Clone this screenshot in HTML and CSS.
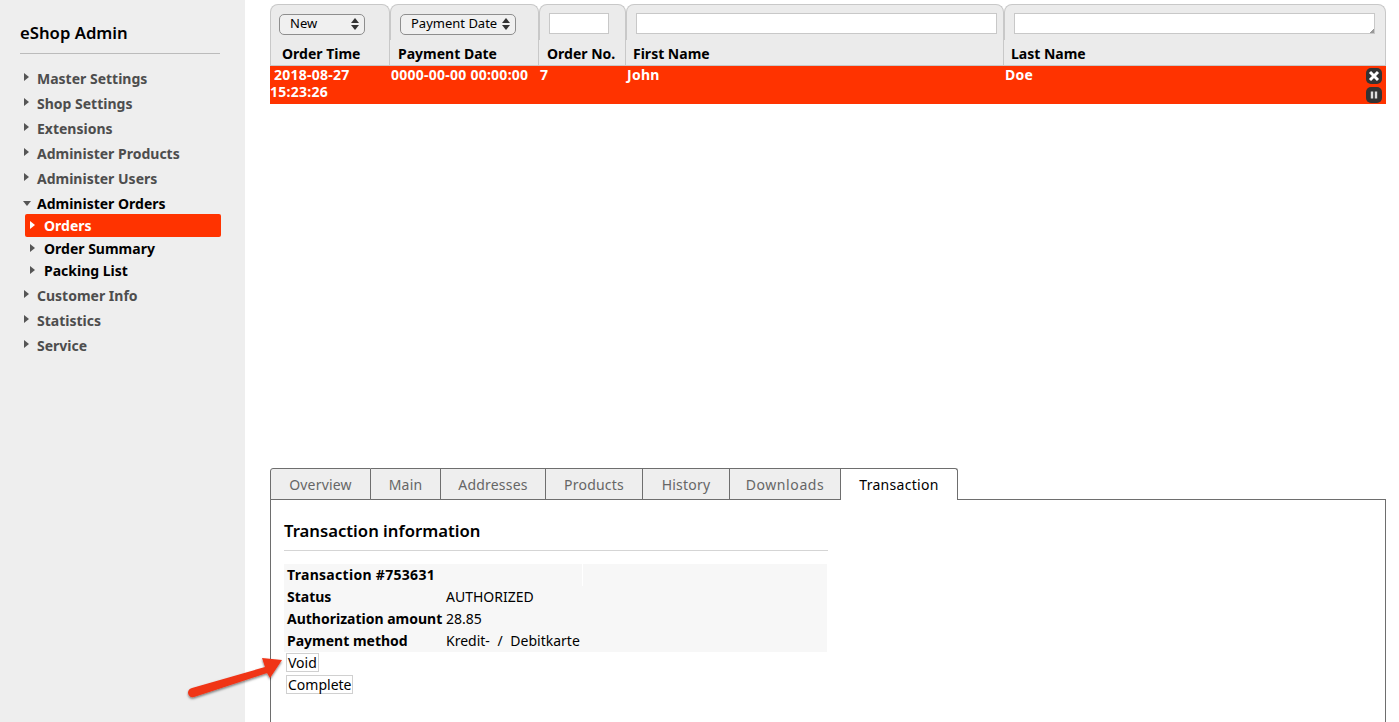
FILE: index.html

```html
<!DOCTYPE html>
<html lang="en">
<head>
    <meta charset="UTF-8">
    <title>eShop Admin</title>
    <link rel="stylesheet" href="styles.css">
</head>
<body>

<aside class="sidebar">
  <h1 class="brand">eShop Admin</h1>
  <ul class="nav">
    <li class="nav-item">Master Settings</li>
    <li class="nav-item">Shop Settings</li>
    <li class="nav-item">Extensions</li>
    <li class="nav-item">Administer Products</li>
    <li class="nav-item">Administer Users</li>
    <li class="nav-item open">Administer Orders</li>
    <li>
      <ul class="subnav">
        <li class="sub-item active">Orders</li>
        <li class="sub-item">Order Summary</li>
        <li class="sub-item">Packing List</li>
      </ul>
    </li>
    <li class="nav-item">Customer Info</li>
    <li class="nav-item">Statistics</li>
    <li class="nav-item">Service</li>
  </ul>
</aside>

<main class="content">
  <table class="orders">
    <colgroup>
      <col class="c1"><col class="c2"><col class="c3"><col class="c4"><col class="c5">
    </colgroup>
    <thead>
      <tr class="filters">
        <th><span class="select sel-new">New<i class="updown"></i></span></th>
        <th><span class="select sel-date">Payment Date<i class="updown"></i></span></th>
        <th><input class="box box-no" type="text"></th>
        <th><input class="box box-wide" type="text"></th>
        <th><textarea class="box box-last" rows="1"></textarea></th>
      </tr>
      <tr class="titles">
        <th class="t1">Order Time</th>
        <th class="t2">Payment Date</th>
        <th class="t2">Order No.</th>
        <th>First Name</th>
        <th>Last Name</th>
      </tr>
    </thead>
    <tbody>
      <tr class="row-new">
        <td><span class="indent"></span>2018-08-27 15:23:26</td>
        <td>0000-00-00 00:00:00</td>
        <td>7</td>
        <td>John</td>
        <td class="last-cell">Doe
          <span class="row-actions">
            <span class="act">
              <svg width="12" height="12" viewBox="0 0 12 12"><path d="M2 2l8 8M10 2l-8 8" stroke="#fff" stroke-width="3"/></svg>
            </span>
            <span class="act">
              <svg width="12" height="12" viewBox="0 0 12 12"><path d="M4 2.5v7M8 2.5v7" stroke="#ddd" stroke-width="2.4"/></svg>
            </span>
          </span>
        </td>
      </tr>
    </tbody>
  </table>

  <div class="tabs">
    <a class="tab first">Overview</a>
    <a class="tab">Main</a>
    <a class="tab">Addresses</a>
    <a class="tab">Products</a>
    <a class="tab">History</a>
    <a class="tab">Downloads</a>
    <a class="tab current">Transaction</a>
  </div>
  <section class="panel">
    <h2 class="panel-title">Transaction information</h2>
    <table class="info">
      <tr><th class="txn-no">Transaction #753631</th><td class="split"></td><td></td></tr>
      <tr><th>Status</th><td>AUTHORIZED</td><td></td></tr>
      <tr><th>Authorization amount</th><td>28.85</td><td></td></tr>
      <tr><th>Payment method</th><td>Kredit- / Debitkarte</td><td></td></tr>
    </table>
    <div class="btn-line"><span class="txn-btn">Void</span></div>
    <div class="btn-line"><span class="txn-btn">Complete</span></div>
  </section>
</main>

<svg class="arrow" width="110" height="56" viewBox="0 0 110 56">
  <defs>
    <filter id="shadow" x="-10%" y="-20%" width="120%" height="150%">
      <feDropShadow dx="0" dy="1.5" stdDeviation="1.2" flood-color="#000" flood-opacity="0.5"/>
    </filter>
  </defs>
  <path filter="url(#shadow)" fill="#f03418" d="M76 3 L96 5 L84 23 L81 18 L8 42 Q3 43 2 38 Q2 34 6 33 L79 12 Z"/>
</svg>

</body>
</html>
```

FILE: styles.css

```css
html, body {
    margin: 0;
    padding: 0;
    height: 100%;
    overflow: hidden;
}

body {
    display: flex;
    background: #fff;
    color: #000;
    font-family: "Noto Sans", "DejaVu Sans", sans-serif;
    font-size: 14px;
}

/* sidebar */
.sidebar {
    width: 245px;
    flex: none;
    background: #eee;
    padding: 21px 25px 0 20px;
    box-sizing: border-box;
}

.brand {
    margin: 0 0 12px;
    padding-bottom: 9px;
    border-bottom: 1px solid #bbb;
    font-size: 16.7px;
    font-weight: 600;
    line-height: 23px;
}

.nav, .subnav {
    list-style: none;
    margin: 0;
    padding: 0;
}

.nav-item {
    position: relative;
    height: 25px;
    line-height: 25px;
    padding-left: 17px;
    font-weight: 700;
    color: #4d4d4d;
}

.nav-item::before, .sub-item::before {
    content: "";
    position: absolute;
    left: 4px;
    top: 7px;
    border-left: 5px solid #555;
    border-top: 4px solid transparent;
    border-bottom: 4px solid transparent;
}

.sub-item::before {
    left: 5px;
}

.nav-item.open {
    color: #000;
}

.nav-item.open::before {
    left: 3px;
    top: 10px;
    border-top: 5px solid #555;
    border-left: 4px solid transparent;
    border-right: 4px solid transparent;
    border-bottom: 0;
}

.subnav {
    margin: -2px -1px 2px 5px;
}

.sub-item {
    position: relative;
    height: 22px;
    line-height: 23px;
    padding-left: 19px;
    font-weight: 700;
}

.sub-item.active {
    height: 23px;
    background: #ff3300;
    color: #fff;
    border-radius: 2px;
}

.sub-item.active::before {
    border-left-color: #fff;
}

/* orders list */
.content {
    flex: 1;
    min-width: 0;
    padding: 4px 13px 0 25px;
}

.orders {
    width: 1116px;
    table-layout: fixed;
    border-collapse: separate;
    border-spacing: 0;
}

.c1 { width: 120px; }
.c2 { width: 149px; }
.c3 { width: 87px; }
.c4 { width: 378px; }
.c5 { width: 382px; }

.filters th {
    height: 36px;
    padding: 8px 0 0 9px;
    background: #ebebeb;
    border: 1px solid #c8c8c8;
    border-width: 1px 1px 0 1px;
    border-radius: 8px 8px 0 0;
    text-align: left;
    vertical-align: top;
    box-sizing: border-box;
}

.filters th:first-child {
    padding-left: 8px;
}

.titles th {
    height: 23px;
    padding: 2px 0 0 7px;
    background: #ebebeb;
    border-bottom: 1px solid #c8c8c8;
    border-right: 1px solid #c8c8c8;
    text-align: left;
    font-weight: 700;
    line-height: 23px;
}

.titles th:first-child {
    border-left: 1px solid #c8c8c8;
}

.titles .t1 {
    padding-left: 11px;
}

.titles .t2 {
    padding-left: 8px;
}

.select {
    display: inline-flex;
    align-items: center;
    justify-content: space-between;
    height: 21px;
    padding: 0 5px 2px 10px;
    box-sizing: border-box;
    background: #f0f0f0;
    border: 1px solid #8e8e8e;
    border-radius: 5px;
    font-weight: 400;
    font-size: 13px;
}

.sel-new { width: 86px; }
.sel-date { width: 116px; }

.updown {
    position: relative;
    width: 8px;
    height: 12px;
    margin-top: 2px;
}

.updown::before, .updown::after {
    content: "";
    position: absolute;
    left: 0;
    border-left: 4px solid transparent;
    border-right: 4px solid transparent;
}

.updown::before {
    top: 0;
    border-bottom: 5px solid #333;
}

.updown::after {
    bottom: 0;
    border-top: 5px solid #333;
}

.box {
    display: block;
    height: 21px;
    margin: 0;
    padding: 0;
    box-sizing: border-box;
    background: #fff;
    border: 1px solid #c8c8c8;
    border-radius: 0;
    resize: none;
}

.box-no { width: 60px; }
.box-wide { width: 361px; }

.box-last {
    width: 361px;
    overflow: hidden;
    background: linear-gradient(135deg, transparent 50%, #999 50%) no-repeat right 0 bottom 0 / 4px 4px, #fff;
}

.row-new td {
    height: 38px;
    padding: 0 0 0 1px;
    background: #ff3300;
    color: #fff;
    font-weight: 700;
    line-height: 17px;
    letter-spacing: 0.25px;
    vertical-align: top;
}

.row-new td:first-child {
    padding-left: 0;
}

.indent {
    display: inline-block;
    width: 4px;
}

.last-cell {
    position: relative;
}

.row-actions {
    position: absolute;
    right: 4px;
    top: 2px;
    display: flex;
    flex-direction: column;
    gap: 3px;
}

.act {
    display: flex;
    align-items: center;
    justify-content: center;
    width: 16px;
    height: 16px;
    background: #333;
    border-radius: 5px;
}

/* tabs */
.tabs {
    display: flex;
    margin-top: 364px;
    height: 32px;
    box-sizing: border-box;
    position: relative;
    z-index: 1;
}

.tab {
    height: 32px;
    line-height: 31px;
    box-sizing: border-box;
    text-align: center;
    letter-spacing: 0.2px;
    background: #eee;
    color: #666;
    border: 1px solid #6e6e6e;
    border-left: 0;
}

.tab:nth-child(1) { width: 101px; }
.tab:nth-child(2) { width: 70px; }
.tab:nth-child(3) { width: 105px; }
.tab:nth-child(4) { width: 97px; }
.tab:nth-child(5) { width: 87px; }
.tab:nth-child(6) { width: 111px; letter-spacing: 0.6px; }
.tab:nth-child(7) { width: 117px; letter-spacing: 0.3px; }

.tab.first {
    border-left: 1px solid #6e6e6e;
    border-top-left-radius: 3px;
}

.tab.current {
    background: #fff;
    color: #000;
    border-bottom: 0;
    border-top-right-radius: 3px;
}

.panel {
    width: 1116px;
    height: 300px;
    margin-top: -1px;
    padding: 19px 13px 0;
    box-sizing: border-box;
    border: 1px solid #6e6e6e;
}

.panel-title {
    width: 544px;
    margin: 0 0 13px;
    padding-bottom: 8px;
    border-bottom: 1px solid #d5d5d5;
    font-size: 16.7px;
    font-weight: 600;
    line-height: 23px;
}

.info {
    width: 543px;
    border-collapse: collapse;
    background: #f7f7f7;
}

.info th, .info td {
    height: 22px;
    padding: 0 0 0 3px;
    text-align: left;
    white-space: nowrap;
    line-height: 21px;
    vertical-align: top;
}

.info th {
    width: 156px;
    font-weight: 700;
}

.info .txn-no {
    letter-spacing: 0.3px;
}

.info td {
    width: 136px;
    font-weight: 400;
    word-spacing: 4px;
}

.info td:last-child {
    width: auto;
}

.info .split {
    border-right: 1px solid #fff;
}

.btn-line {
    height: 22px;
    padding-left: 2px;
}

.txn-btn {
    display: inline-block;
    height: 19px;
    line-height: 17px;
    margin-top: 1px;
    padding: 0 1px;
    border: 1px solid #d0d0d0;
    box-sizing: border-box;
}

/* callout over the page */
.arrow {
    position: absolute;
    left: 186px;
    top: 655px;
}
```
